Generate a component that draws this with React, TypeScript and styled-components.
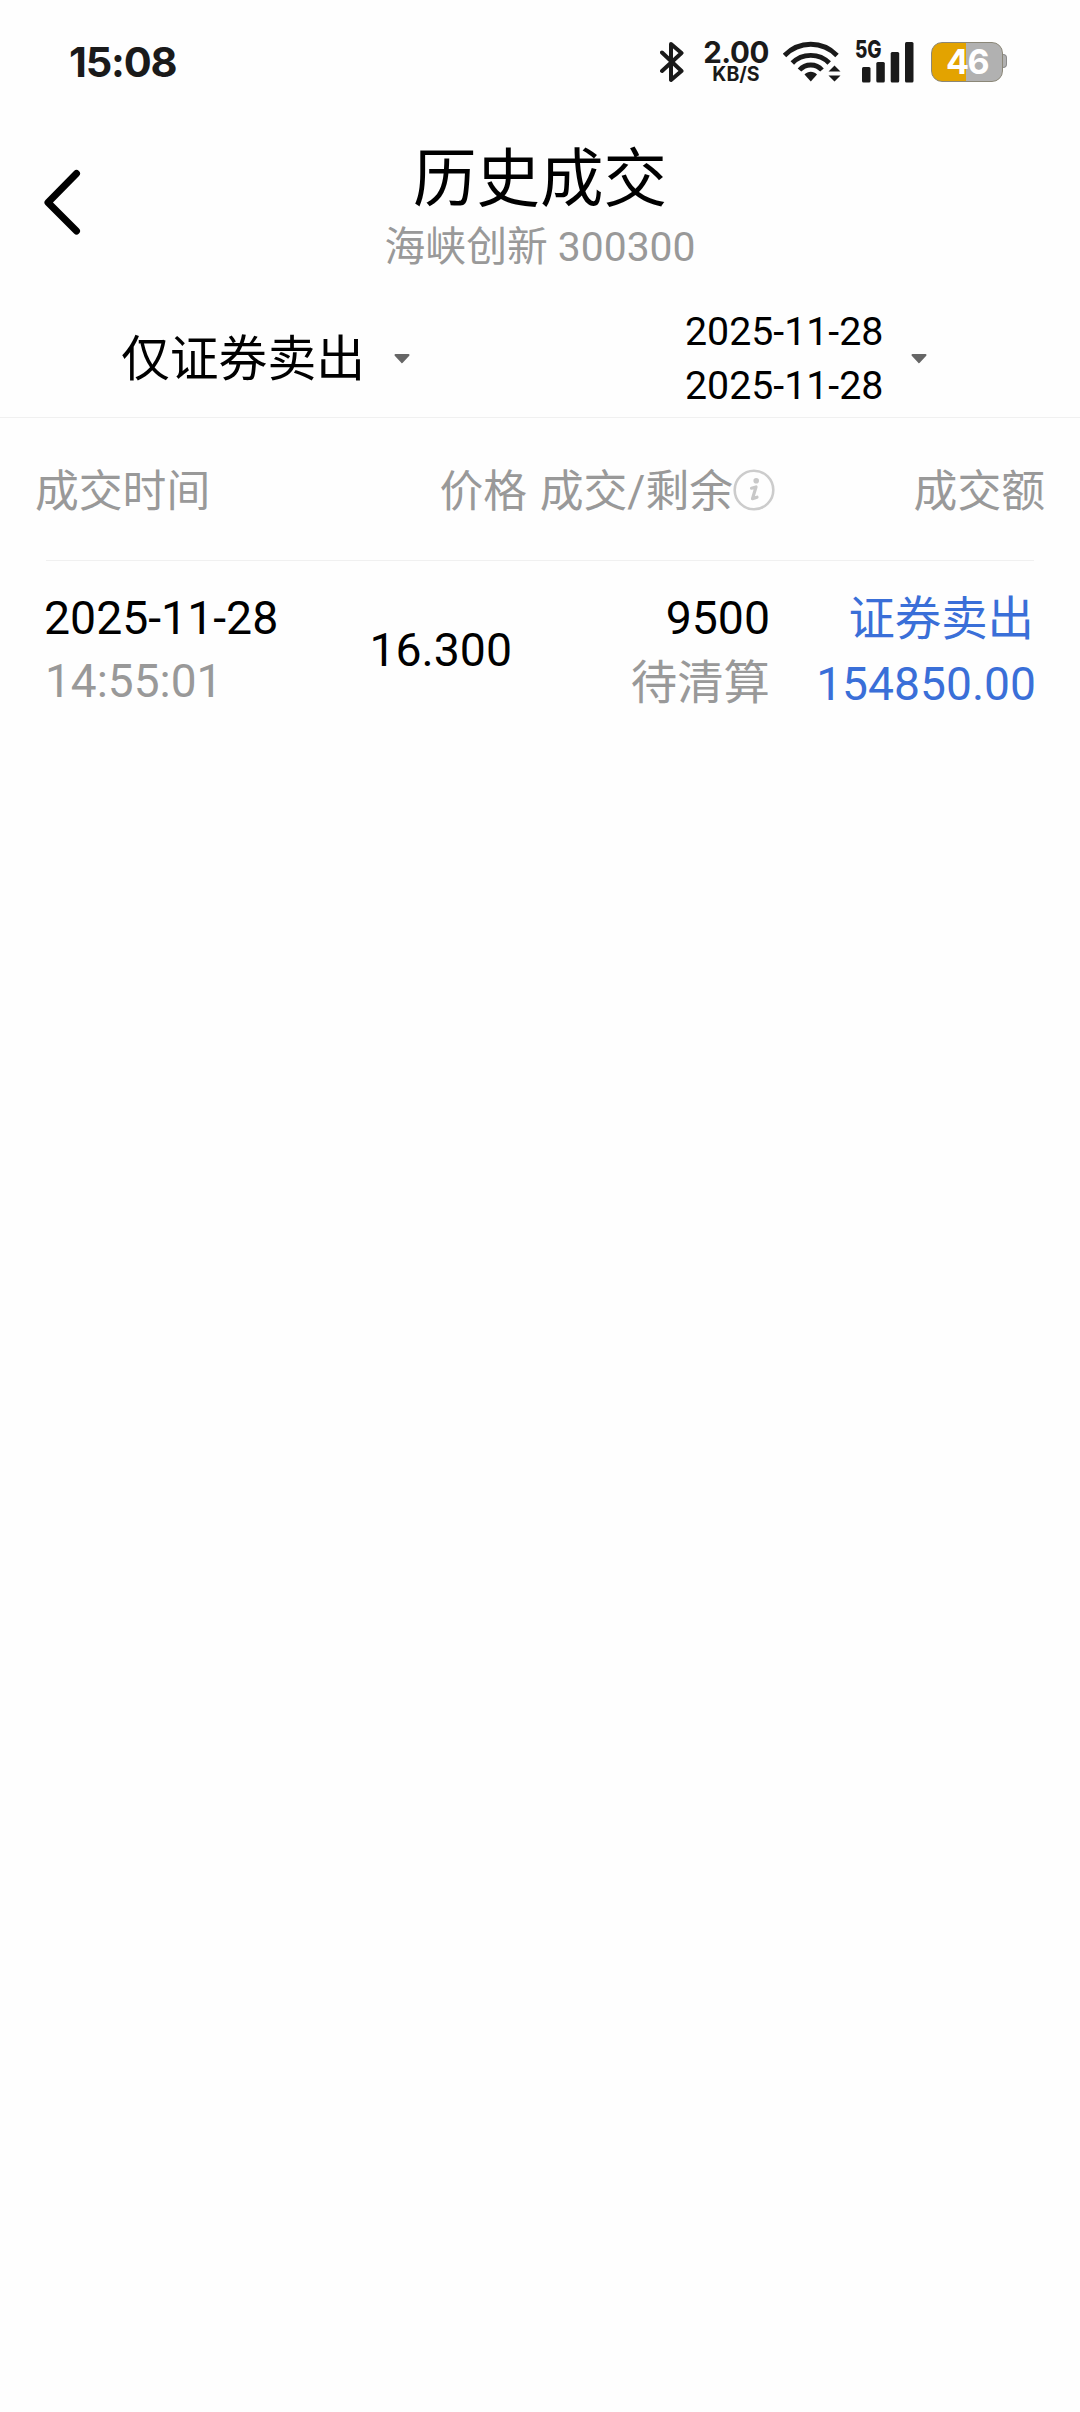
import React from "react";
import styled, { createGlobalStyle } from "styled-components";

const Global = createGlobalStyle`
  * { box-sizing: border-box; }
  body { margin: 0; background: #fefefe; }
`;

const Screen = styled.div`
  width: 1080px;
  min-height: 2412px;
  display: flex;
  flex-direction: column;
  background: #fefefe;
  color: #000;
  font-family: Roboto, "Noto Sans CJK SC", sans-serif;
`;

const StatusBar = styled.div`
  height: 124px;
  padding: 0 73px 0 69px;
  display: flex;
  align-items: center;
  color: #1a1a1a;
  font-family: Inter, "Noto Sans", sans-serif;
`;

const Clock = styled.div`
  flex: 1;
  font-size: 41.5px;
  font-weight: 700;
  line-height: 50px;
  letter-spacing: -1.2px;
`;

const StatusIcon = styled.svg<{ $gap: number }>`
  display: block;
  flex: none;
  margin-left: ${(p) => p.$gap}px;
`;

const NetSpeed = styled.div`
  width: 64px;
  height: 44px;
  margin-left: 20px;
  display: flex;
  flex-direction: column;
  align-items: center;
  white-space: nowrap;
`;

const SpeedValue = styled.div`
  font-size: 29.5px;
  font-weight: 700;
  line-height: 24px;
  letter-spacing: -0.4px;
`;

const SpeedUnit = styled.div`
  font-size: 19.5px;
  font-weight: 700;
  line-height: 21px;
`;

const Signal = styled.div`
  position: relative;
  width: 58px;
  height: 42px;
  margin-left: 15px;
`;

const Network = styled.span`
  position: absolute;
  left: -1px;
  top: 0;
  font-size: 24px;
  font-weight: 800;
  line-height: 18px;
  transform: scaleX(0.79);
  transform-origin: left;
`;

const Battery = styled.div`
  position: relative;
  width: 72px;
  height: 40px;
  margin: 0 4px 0 17px;
  border: 1.5px solid #8b8778;
  border-radius: 11px;
  background: linear-gradient(90deg, #e3a300 48.5%, #b1b1b1 48.5%);
  color: #fff;
  font-size: 34px;
  font-weight: 700;
  line-height: 38px;
  letter-spacing: -1.5px;
  text-align: center;
`;

const Nub = styled.i`
  position: absolute;
  right: -5px;
  top: 11px;
  width: 4px;
  height: 14px;
  border: 1px solid #8b8b8b;
  border-left: 0;
  border-radius: 0 4px 4px 0;
  background: #b1b1b1;
`;

const TitleBar = styled.header`
  height: 172px;
  padding: 18px 44px 0;
  display: grid;
  grid-template-columns: 38px 1fr 38px;
`;

const BackButton = styled.button`
  width: 38px;
  height: 66px;
  margin-top: 27px;
  padding: 0;
  border: 0;
  background: none;
`;

const Titles = styled.div`
  display: flex;
  flex-direction: column;
  align-items: center;
`;

const Title = styled.h1`
  margin: 0;
  font-size: 63.5px;
  font-weight: 400;
  line-height: 75px;
`;

const Subtitle = styled.div`
  font-size: 40.8px;
  line-height: 61px;
  color: #999;
`;

const Filters = styled.div`
  height: 122px;
  padding-top: 4px;
  display: grid;
  grid-template-columns: 1fr 1fr;
  border-bottom: 1px solid #f0f0f0;
`;

const Filter = styled.div<{ $left: number; $gap: number }>`
  display: flex;
  align-items: center;
  gap: ${(p) => p.$gap}px;
  padding-left: ${(p) => p.$left}px;
`;

const FilterLabel = styled.span`
  padding-top: 2px;
  font-size: 48.8px;
  line-height: 60px;
`;

const DateRange = styled.div`
  display: flex;
  flex-direction: column;
  font-size: 39.3px;
  line-height: 54px;
`;

const Table = styled.section`
  display: flex;
  flex-direction: column;
`;

const HeaderRow = styled.div`
  height: 142px;
  padding: 2px 35px 0 35px;
  display: grid;
  grid-template-columns: 280px 212px 248px 1fr;
  align-items: center;
  font-size: 43.8px;
  line-height: 60px;
  color: #999;
`;

const HeaderCell = styled.div<{ $end?: boolean }>`
  display: flex;
  align-items: center;
  justify-content: ${(p) => (p.$end ? "flex-end" : "flex-start")};
  white-space: nowrap;
`;

const HeaderText = styled.span`
  padding-top: 4px;
`;

const Row = styled.div`
  margin: 0 46px;
  height: 174px;
  padding-top: 25px;
  border-top: 1px solid #f0f0f0;
  display: grid;
  grid-template-columns: 260px 206px 258px 1fr;
  font-size: 46.4px;
  line-height: 65px;
`;

const Cell = styled.div<{ $end?: boolean; $blue?: boolean; $middle?: boolean }>`
  display: flex;
  flex-direction: column;
  align-items: ${(p) => (p.$end ? "flex-end" : "flex-start")};
  justify-content: ${(p) => (p.$middle ? "center" : "flex-start")};
  height: 128px;
  white-space: nowrap;
  color: ${(p) => (p.$blue ? "#3a6fd8" : "#000")};
`;

const DateText = styled.span`
  margin-left: -2px;
`;

const Muted = styled.span`
  color: #999;
`;

const TimeText = styled(Muted)`
  margin: -2px 0 0 -1px;
  font-size: 46px;
`;

const TradeType = styled.span`
  padding-top: 1px;
`;

const Amount = styled.span`
  margin-right: -2px;
  font-size: 46.2px;
`;

const Caret = () => (
  <svg width="16" height="10" viewBox="0 0 16 10">
    <path d="M1.5 1h13L8 8.2z" fill="#666" stroke="#666" strokeWidth="2" strokeLinejoin="round" />
  </svg>
);

const Bluetooth = () => (
  <StatusIcon $gap={0} width="24" height="42" viewBox="0 0 24 42">
    <path
      d="M2 11.5L21.5 30 11 39V3l10.500 9L2 30"
      fill="none"
      stroke="#1a1a1a"
      strokeWidth="4"
      strokeLinecap="round"
      strokeLinejoin="round"
    />
  </StatusIcon>
);

const Wifi = () => (
  <StatusIcon $gap={15} width="58" height="42" viewBox="0 0 58 42">
    <g fill="none" stroke="#1a1a1a" strokeWidth="4.800" strokeLinecap="butt">
      <path d="M1.500 14.500C16 -.5 39.500 -.5 54 14.500" />
      <path d="M9.300 22C19 11.700 36.500 11.700 46.200 22" />
      <path d="M16.500 29C22.500 22.300 33 22.300 39 29" />
    </g>
    <path d="M21.500 33.500C25 29.800 30.500 29.800 34 33.500L27.800 40.500z" fill="#1a1a1a" />
    <path d="M45.500 30.500L51.500 24.500 57.500 30.500zM45.500 34.500L51.500 40.500 57.500 34.500z" fill="#1a1a1a" />
  </StatusIcon>
);

const SignalBars = () => (
  <svg width="58" height="42" viewBox="0 0 58 42">
    <g fill="#1a1a1a">
      <rect x="6" y="26" width="8.500" height="15.500" rx="1.500" />
      <rect x="20.300" y="21" width="8.500" height="20.500" rx="1.500" />
      <rect x="34.700" y="11" width="8.500" height="30.500" rx="1.500" />
      <rect x="49" y="1" width="8.500" height="40.500" rx="1.500" />
    </g>
  </svg>
);

const InfoIcon = () => (
  <svg width="42" height="42" viewBox="0 0 42 42">
    <circle cx="21" cy="21" r="19.300" fill="none" stroke="#ccc" strokeWidth="2.600" />
    <circle cx="23.200" cy="11.800" r="2.800" fill="#c8c8c8" />
    <path
      d="M18.500 19.200L23 18 19.500 29.600 24 28.200"
      fill="none"
      stroke="#c8c8c8"
      strokeWidth="3.200"
      strokeLinecap="round"
      strokeLinejoin="round"
    />
  </svg>
);

export default function App() {
  return (
    <Screen>
      <Global />
      <StatusBar>
        <Clock>15:08</Clock>
        <Bluetooth />
        <NetSpeed>
          <SpeedValue>2.00</SpeedValue>
          <SpeedUnit>KB/S</SpeedUnit>
        </NetSpeed>
        <Wifi />
        <Signal>
          <SignalBars />
          <Network>5G</Network>
        </Signal>
        <Battery>
          46
          <Nub />
        </Battery>
      </StatusBar>

      <TitleBar>
        <BackButton aria-label="返回">
          <svg width="38" height="66" viewBox="0 0 38 66">
            <path
              d="M32.500 4.500L4 33.500 32.500 62"
              fill="none"
              stroke="#000"
              strokeWidth="7"
              strokeLinecap="round"
              strokeLinejoin="round"
            />
          </svg>
        </BackButton>
        <Titles>
          <Title>历史成交</Title>
          <Subtitle>海峡创新 300300</Subtitle>
        </Titles>
      </TitleBar>

      <Filters>
        <Filter $left={121} $gap={29}>
          <FilterLabel>仅证券卖出</FilterLabel>
          <Caret />
        </Filter>
        <Filter $left={145} $gap={28}>
          <DateRange>
            <span>2025-11-28</span>
            <span>2025-11-28</span>
          </DateRange>
          <Caret />
        </Filter>
      </Filters>

      <Table>
        <HeaderRow>
          <HeaderCell>
            <HeaderText>成交时间</HeaderText>
          </HeaderCell>
          <HeaderCell $end>
            <HeaderText>价格</HeaderText>
          </HeaderCell>
          <HeaderCell $end>
            <HeaderText>成交/剩余</HeaderText>
            <InfoIcon />
          </HeaderCell>
          <HeaderCell $end>
            <HeaderText>成交额</HeaderText>
          </HeaderCell>
        </HeaderRow>

        <Row>
          <Cell>
            <DateText>2025-11-28</DateText>
            <TimeText>14:55:01</TimeText>
          </Cell>
          <Cell $end $middle>
            16.300
          </Cell>
          <Cell $end>
            <span>9500</span>
            <Muted>待清算</Muted>
          </Cell>
          <Cell $end $blue>
            <TradeType>证券卖出</TradeType>
            <Amount>154850.00</Amount>
          </Cell>
        </Row>
      </Table>
    </Screen>
  );
}
